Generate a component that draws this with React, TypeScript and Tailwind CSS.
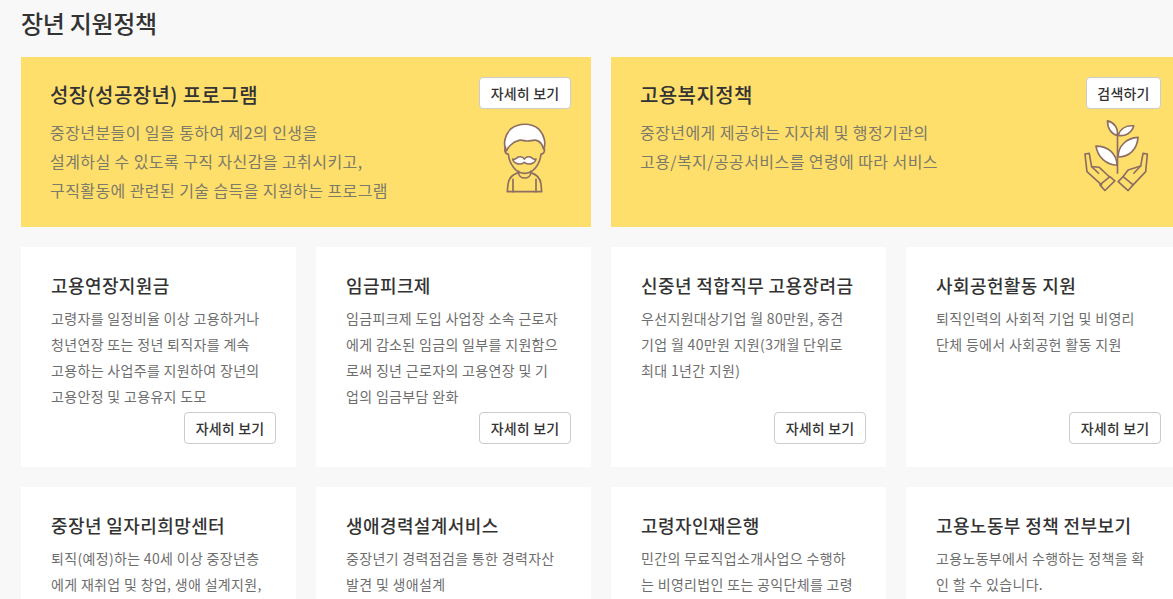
import React from 'react';

const FONT = '"Noto Sans CJK KR", "Noto Sans", sans-serif';

interface Policy {
  title: string;
  lines: string[];
  button?: string;
}

const policies: Policy[] = [
  {
    title: '고용연장지원금',
    lines: ['고령자를 일정비율 이상 고용하거나', '청년연장 또는 정년 퇴직자를 계속', '고용하는 사업주를 지원하여 장년의', '고용안정 및 고용유지 도모'],
    button: '자세히 보기',
  },
  {
    title: '임금피크제',
    lines: ['임금피크제 도입 사업장 소속 근로자', '에게 감소된 임금의 일부를 지원함으', '로써 징년 근로자의 고용연장 및 기', '업의 임금부담 완화'],
    button: '자세히 보기',
  },
  {
    title: '신중년 적합직무 고용장려금',
    lines: ['우선지원대상기업 월 80만원, 중견', '기업 월 40만원 지원(3개월 단위로', '최대 1년간 지원)'],
    button: '자세히 보기',
  },
  {
    title: '사회공헌활동 지원',
    lines: ['퇴직인력의 사회적 기업 및 비영리', '단체 등에서 사회공헌 활동 지원'],
    button: '자세히 보기',
  },
  {
    title: '중장년 일자리희망센터',
    lines: ['퇴직(예정)하는 40세 이상 중장년층', '에게 재취업 및 창업, 생애 설계지원,'],
  },
  {
    title: '생애경력설계서비스',
    lines: ['중장년기 경력점검을 통한 경력자산', '발견 및 생애설계'],
  },
  {
    title: '고령자인재은행',
    lines: ['민간의 무료직업소개사업으 수행하', '는 비영리법인 또는 공익단체를 고령'],
  },
  {
    title: '고용노동부 정책 전부보기',
    lines: ['고용노동부에서 수행하는 정책을 확', '인 할 수 있습니다.'],
  },
];

const DetailButton = ({ label, className = '' }: { label: string; className?: string }) => (
  <button className={`h-8 rounded border border-[#cccccc] bg-white text-[14px] font-medium leading-none tracking-[0.2px] text-[#333333] ${className}`}>
    {label}
  </button>
);

// coordinates read off the reference at 3x, hence the large viewBox
const ElderIcon = () => (
  <svg width="44" height="71" viewBox="99 186 132 213" fill="none" stroke="#8d6e63" strokeWidth="5" strokeLinejoin="round" strokeLinecap="round">
    <path d="M107 268C100 250 104 226 122 207c24-19 62-19 84 0 18 19 22 43 15 61-3-12-9-24-22-27-11-2-18 3-28 2-8 0-14-4-24-2-10 2-18 7-25 14-6 6-11 12-13 18z" fill="#fff" />
    <path d="M107 262c-5 8-2 20 8 20 3 32 24 58 49 58s46-26 49-58c10 0 13-12 8-20" />
    <path d="M163 297c-6-8-16-9-23-3-4 4-8 5-12 3 2 14 22 20 35 10 13 10 33 4 35-10-4 2-8 1-12-3-7-6-17-5-23 3z" fill="#fff" />
    <path d="M146 334v5c0 9 8 15 18 15s18-6 18-15v-5" />
    <path d="M146 338c-18 5-30 17-32 34l-2 23h103l-2-23c-2-17-14-29-31-34" />
    <path d="M129 358v37M198 358v37" />
  </svg>
);

const PlantIcon = () => (
  <svg width="73" height="76" viewBox="60 174 220 228" fill="none" stroke="#8d6e63" strokeWidth="5" strokeLinejoin="round" strokeLinecap="round">
    <path d="M173 340V226" />
    <path d="M172 226c-18-5-30-22-29-44 20 5 33 22 29 44z" fill="#fff" />
    <path d="M175 226c6-20 24-31 47-29-6 21-25 33-47 29z" fill="#fff" />
    <path d="M175 291c0-34 25-57 60-59-3 36-26 59-60 59z" fill="#fff" />
    <path d="M172 316c-34-2-58-24-64-58 36 0 62 22 64 58z" fill="#fff" />
    <path d="M125 375L81 335l-6-53 13-2 7 40 23 2 32 30" />
    <path d="M95 320l21 20" />
    <path d="M150 350l15 13-30 29-15-17z" />
    <path d="M220 375l38-40 5-53-13-2-7 38-38 12-15 20" />
    <path d="M243 318l-21 22" />
    <path d="M190 350l-15 15 30 27 15-17z" />
  </svg>
);

const PolicyCard = ({ policy }: { policy: Policy }) => (
  <div className="flex h-[220px] flex-col bg-white pl-[30px] pr-5 pt-[22px]">
    <h3 className="text-[18px] font-medium leading-[32px] tracking-[0.4px] text-[#333333]">{policy.title}</h3>
    <div className="mt-1 text-[14px] leading-[26px] tracking-[0.33px] text-[#6e6e6e]">
      {policy.lines.map((line) => (
        <p key={line} className="whitespace-nowrap">{line}</p>
      ))}
    </div>
    {policy.button && (
      <div className="mt-auto flex justify-end pb-[23px]">
        <DetailButton label={policy.button} className="w-[92px]" />
      </div>
    )}
  </div>
);

export default function App() {
  return (
    <div className="h-[599px] w-[1173px] overflow-hidden bg-[#f8f8f8] pl-[21px]" style={{ fontFamily: FONT }}>
      <div className="w-[1160px]">
        <h2 className="flex h-[57px] items-start pt-[6px] text-[24px] font-medium leading-[34px] tracking-[-0.3px] text-[#333333]">장년 지원정책</h2>
        <div className="grid grid-cols-2 gap-5">
          <div className="relative flex h-[170px] justify-between bg-[#ffdf6b] pl-[29px] pr-5 pt-[20px]">
            <div>
              <h3 className="text-[20px] font-medium leading-[36px] tracking-[0.4px] text-[#333333]">성장(성공장년) 프로그램</h3>
              <div className="mt-[5px] text-[16px] leading-[29px] tracking-[0.42px] text-[#7c7a68]">
                <p>중장년분들이 일을 통하여 제2의 인생을</p>
                <p>설계하실 수 있도록 구직 자신감을 고취시키고,</p>
                <p>구직활동에 관련된 기술 습득을 지원하는 프로그램</p>
              </div>
            </div>
            <DetailButton label="자세히 보기" className="w-[92px]" />
            <div className="absolute left-[482px] top-[65px]"><ElderIcon /></div>
          </div>
          <div className="relative flex h-[170px] justify-between bg-[#ffdf6b] pl-[29px] pr-5 pt-[20px]">
            <div>
              <h3 className="text-[20px] font-medium leading-[36px] tracking-[0.4px] text-[#333333]">고용복지정책</h3>
              <div className="mt-[5px] text-[16px] leading-[29px] tracking-[0.42px] text-[#7c7a68]">
                <p>중장년에게 제공하는 지자체 및 행정기관의</p>
                <p>고용/복지/공공서비스를 연령에 따라 서비스</p>
              </div>
            </div>
            <DetailButton label="검색하기" className="w-[75px]" />
            <div className="absolute left-[469px] top-[61px]"><PlantIcon /></div>
          </div>
        </div>
        <div className="mt-5 grid grid-cols-4 gap-5">
          {policies.map((policy) => (
            <PolicyCard key={policy.title} policy={policy} />
          ))}
        </div>
      </div>
    </div>
  );
}
